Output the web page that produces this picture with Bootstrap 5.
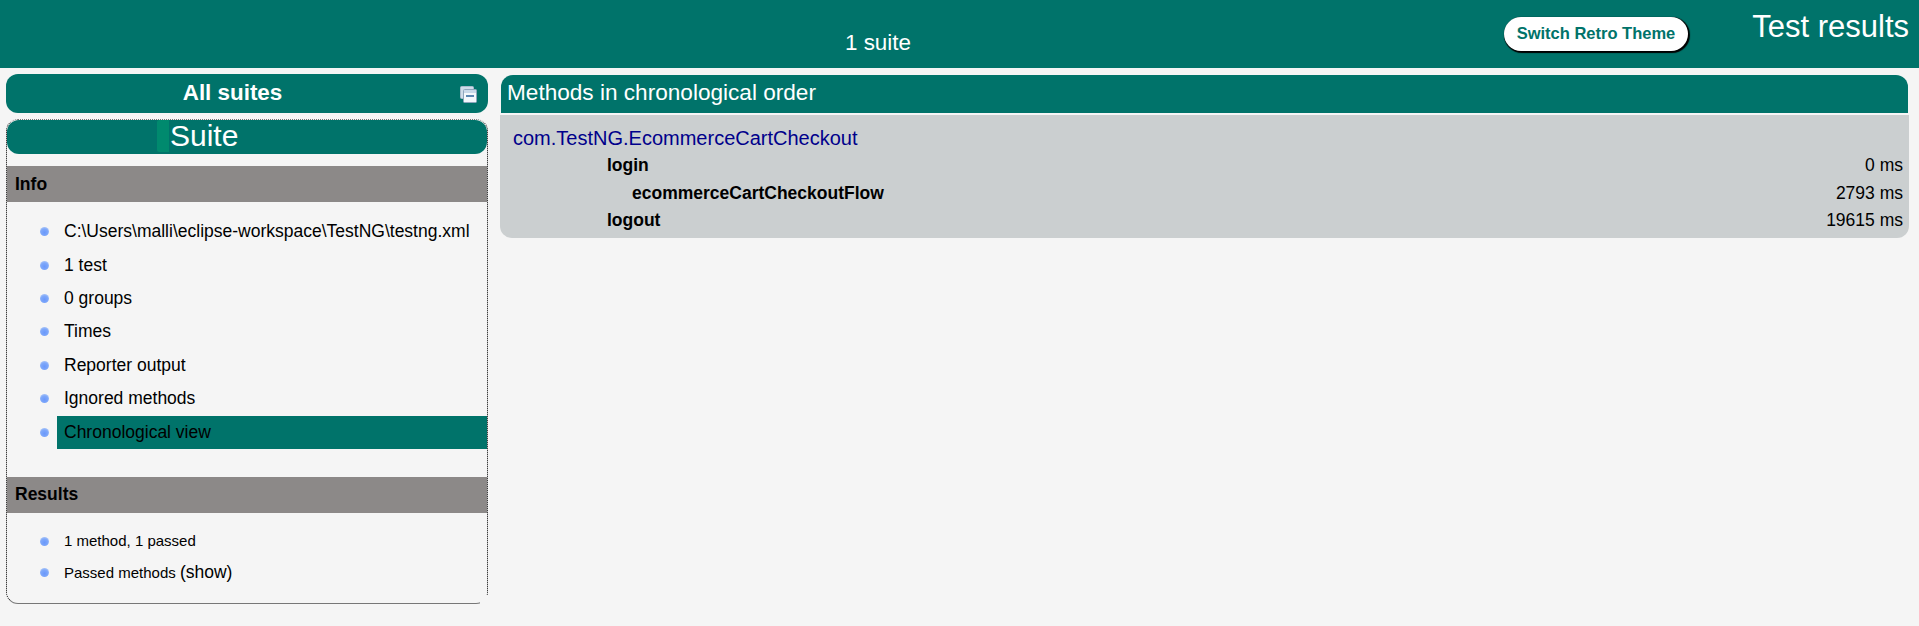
<!DOCTYPE html>
<html lang="en">

<head>
    <meta charset="UTF-8" />
    <meta name="viewport" content="width=device-width, initial-scale=1.0" />
    <title>TestNG reports</title>
    <link href="https://cdn.jsdelivr.net/npm/bootstrap@5.3.0/dist/css/bootstrap.min.css" rel="stylesheet" />
    <style>
        body {
            background: #f5f5f5;
            font-family: "Liberation Sans", Arial, sans-serif;
            color: #000;
            font-size: 17.5px;
        }

        .top-bar {
            height: 68px;
            background: #00736a;
            color: #fff;
        }

        .suite-count {
            width: 1504px;
            padding: 30px 0 0 845px;
            font-size: 22.4px;
            line-height: 26px;
        }

        .retro-btn {
            width: 184px;
            height: 34px;
            margin-top: 17px;
            border: 0;
            border-radius: 17px;
            background: #fff;
            color: #00736a;
            font-size: 16.5px;
            font-weight: 700;
            line-height: 32px;
            padding: 0 0 2px;
            box-shadow: 1px 1px 1px 1px #000;
        }

        .report-title {
            padding: 9px 10px 0 0;
            font-size: 31px;
            line-height: 36px;
        }

        .page-body {
            padding: 6px 10px 0 6px;
            gap: 12px;
        }

        .side-col {
            width: 482px;
        }

        .all-suites {
            height: 39px;
            border-radius: 12px;
            background: #00736a;
            color: #fff;
            font-size: 22.4px;
            font-weight: 700;
            line-height: 37px;
            text-align: center;
            position: relative;
            padding-right: 29px;
        }

        .collapse-icon {
            position: absolute;
            right: 11px;
            top: 12px;
        }

        .suite-panel {
            position: relative;
            height: 485px;
            margin-top: 6px;
            border: 1px dotted #000;
            border-top-color: #777;
            border-bottom: 1px solid #777;
            border-radius: 12px;
        }

        .suite-panel::after {
            content: "";
            position: absolute;
            right: -1px;
            bottom: -1px;
            width: 8px;
            height: 9px;
            background: #f5f5f5;
        }

        .suite-head {
            height: 34px;
            background: #00736a;
            border-radius: 12px;
            color: #fff;
            font-size: 30px;
            line-height: 32px;
            padding-left: 150px;
        }

        .suite-head span {
            display: inline-block;
            height: 32px;
            width: 12px;
            margin-right: 1px;
            background: #008a6e;
            border-radius: 2px 0 0 2px;
            vertical-align: top;
        }

        .group-bar {
            height: 36px;
            background: #8c8988;
            font-weight: 700;
            line-height: 36px;
            padding-left: 8px;
        }

        .info-bar {
            margin-top: 12px;
        }

        .item-list {
            list-style: none;
            margin: 0;
            padding: 13px 0 0 33px;
        }

        .item-list li {
            display: flex;
            align-items: center;
            height: 33.4px;
        }

        .item-list li::before {
            content: "";
            width: 9px;
            height: 9px;
            margin-right: 8px;
            flex: none;
            border-radius: 50%;
            background: radial-gradient(circle at 50% 62%, #6a98fb 0, #7ea8fa 50%, #b5ccf7 85%, #dbe6f8 100%);
        }

        .item-text {
            flex-grow: 1;
            height: 33px;
            line-height: 32px;
            padding-left: 7px;
        }

        .item-on {
            background: #00736a;
        }

        .results-bar {
            margin-top: 28px;
            line-height: 34px;
        }

        .results-list {
            padding-top: 13px;
        }

        .results-list li {
            height: 31px;
            font-size: 15px;
        }

        .results-list .show-link {
            font-size: 17.5px;
        }

        .main-col {
            width: 1409px;
            padding-top: 1px;
        }

        .main-head {
            height: 38px;
            margin: 0 1px;
            background: #00736a;
            border-radius: 12px 12px 0 0;
            color: #fff;
            font-size: 22.6px;
            line-height: 36px;
            padding-left: 6px;
        }

        .main-card {
            margin-top: 2px;
            height: 123px;
            background: #cbcfd0;
            border-radius: 0 0 12px 12px;
            padding: 9px 6px 0 13px;
        }

        .class-name {
            color: #00008b;
            font-size: 20px;
            line-height: 28px;
        }

        .method-row {
            height: 27.7px;
            line-height: 27px;
        }

        .method-name {
            font-weight: 700;
            padding-left: 94px;
        }

        .method-nested {
            padding-left: 119px;
        }
    </style>
</head>

<body>
    <div class="top-bar d-flex">
        <div class="suite-count">1 suite</div>
        <button class="retro-btn" type="button">Switch Retro Theme</button>
        <div class="report-title ms-auto">Test results</div>
    </div>

    <div class="page-body d-flex align-items-start">
        <div class="side-col flex-shrink-0">
            <div class="all-suites">
                All suites
                <svg class="collapse-icon" width="17" height="17" viewBox="0 0 17 17">
                    <rect x="0.5" y="0.5" width="13" height="12" rx="1" fill="#cfdcea" stroke="#a9bbcd" />
                    <rect x="3.5" y="3.5" width="13" height="13" rx="1" fill="#f4f8fc" stroke="#8fa6bd" />
                    <rect x="4" y="4" width="12" height="3" fill="#c9d9ea" />
                    <rect x="6" y="9" width="8" height="2" fill="#5b87b2" />
                </svg>
            </div>

            <div class="suite-panel">
                <div class="suite-head"><span></span>Suite</div>

                <div class="group-bar info-bar">Info</div>
                <ul class="item-list">
                    <li><div class="item-text">C:\Users\malli\eclipse-workspace\TestNG\testng.xml</div></li>
                    <li><div class="item-text">1 test</div></li>
                    <li><div class="item-text">0 groups</div></li>
                    <li><div class="item-text">Times</div></li>
                    <li><div class="item-text">Reporter output</div></li>
                    <li><div class="item-text">Ignored methods</div></li>
                    <li><div class="item-text item-on">Chronological view</div></li>
                </ul>

                <div class="group-bar results-bar">Results</div>
                <ul class="item-list results-list">
                    <li><div class="item-text">1 method, 1 passed</div></li>
                    <li><div class="item-text">Passed methods <span class="show-link">(show)</span></div></li>
                </ul>
            </div>
        </div>

        <div class="main-col flex-shrink-0">
            <div class="main-head">Methods in chronological order</div>
            <div class="main-card">
                <div class="class-name">com.TestNG.EcommerceCartCheckout</div>
                <div class="method-row d-flex justify-content-between">
                    <span class="method-name">login</span><span>0 ms</span>
                </div>
                <div class="method-row d-flex justify-content-between">
                    <span class="method-name method-nested">ecommerceCartCheckoutFlow</span><span>2793 ms</span>
                </div>
                <div class="method-row d-flex justify-content-between">
                    <span class="method-name">logout</span><span>19615 ms</span>
                </div>
            </div>
        </div>
    </div>

    <script src="https://cdn.jsdelivr.net/npm/bootstrap@5.3.0/dist/js/bootstrap.bundle.min.js"></script>
</body>

</html>
